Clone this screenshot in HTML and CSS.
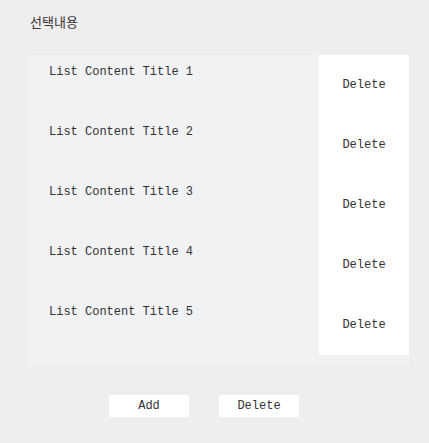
FILE: index.html
```html
<!DOCTYPE html>
<html>
<head>
<meta charset="utf-8">
<link rel="stylesheet" href="styles.css">
</head>
<body>
<div class="page">
  <h1 class="heading">선택내용</h1>
  <div class="panel">
    <div class="row"><div class="row-title">List Content Title 1</div><div class="row-action">Delete</div></div>
    <div class="row"><div class="row-title">List Content Title 2</div><div class="row-action">Delete</div></div>
    <div class="row"><div class="row-title">List Content Title 3</div><div class="row-action">Delete</div></div>
    <div class="row"><div class="row-title">List Content Title 4</div><div class="row-action">Delete</div></div>
    <div class="row"><div class="row-title">List Content Title 5</div><div class="row-action">Delete</div></div>
  </div>
  <div class="buttons">
    <div class="btn">Add</div>
    <div class="btn">Delete</div>
  </div>
</div>
</body>
</html>
```
FILE: styles.css
```css
html, body {
  margin: 0;
  padding: 0;
  background: #eeeeee;
}
.page {
  width: 429px;
  height: 443px;
  padding: 14px 20px 0 29px;
  box-sizing: border-box;
  font-family: "Liberation Mono", "Courier New", monospace;
  font-size: 12px;
  color: #333333;
}
.heading {
  margin: 0 0 0 1px;
  font-family: "Noto Sans CJK KR", sans-serif;
  font-size: 13px;
  font-weight: normal;
  line-height: 16px;
  height: 16px;
  color: #3a3333;
}
.panel {
  margin-top: 25px;
  width: 380px;
  background: #f1f2f4;
  padding-bottom: 10px;
}
.row {
  display: flex;
  height: 60px;
}
.row-title {
  flex: 1;
  padding: 10px 0 0 20px;
  line-height: 14px;
}
.row-action {
  width: 90px;
  background: #ffffff;
  text-align: center;
  padding-top: 23px;
  line-height: 14px;
  box-sizing: border-box;
}
.buttons {
  display: flex;
  gap: 30px;
  margin: 30px 0 0 80px;
}
.btn {
  width: 80px;
  height: 22px;
  line-height: 22px;
  background: #ffffff;
  text-align: center;
}
```
